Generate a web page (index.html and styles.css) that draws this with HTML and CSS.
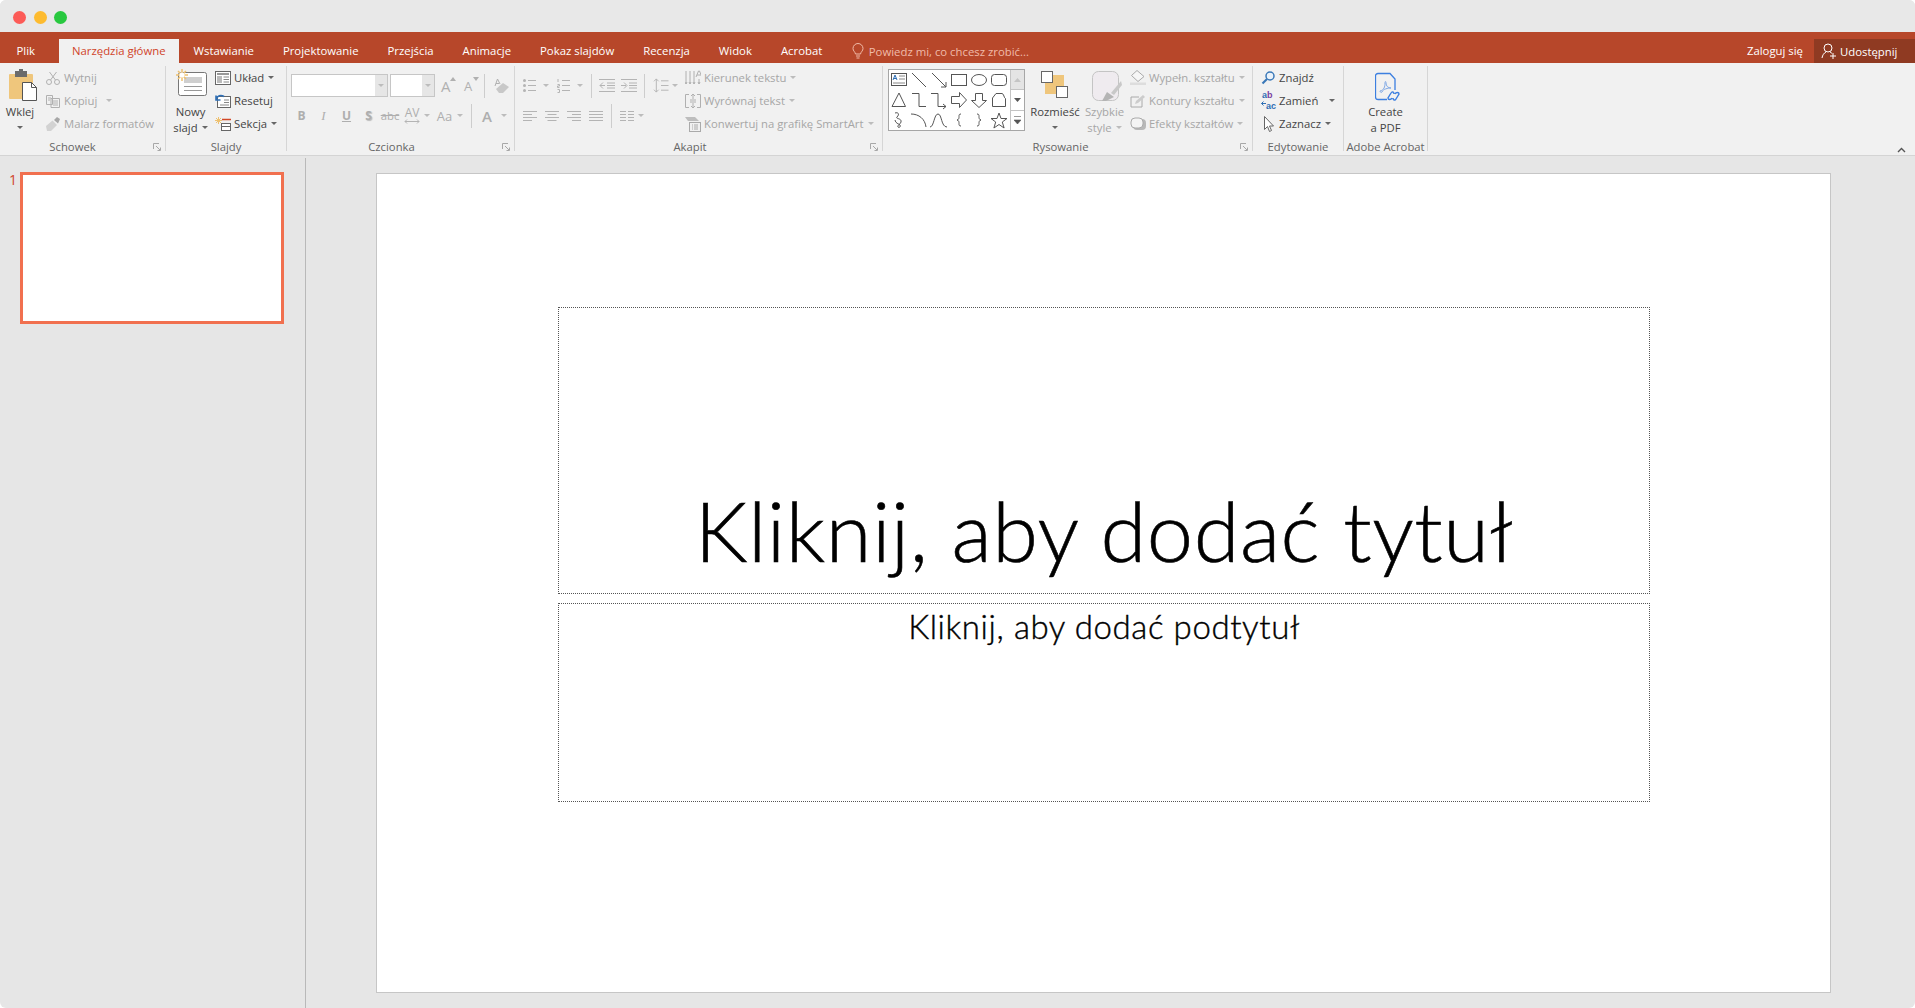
FILE: index.html
```html
<!DOCTYPE html>
<html lang="pl">
<head>
<meta charset="utf-8">
<title>PowerPoint</title>
<link rel="stylesheet" href="styles.css">
</head>
<body>
<header class="titlebar">
  <span class="dot dot-red"></span><span class="dot dot-yellow"></span><span class="dot dot-green"></span>
</header>
<nav class="tabs">
  <span class="tab tab-file">Plik</span>
  <span class="tab tab-active">Narzędzia główne</span>
  <span class="tab">Wstawianie</span>
  <span class="tab">Projektowanie</span>
  <span class="tab">Przejścia</span>
  <span class="tab">Animacje</span>
  <span class="tab">Pokaz slajdów</span>
  <span class="tab">Recenzja</span>
  <span class="tab">Widok</span>
  <span class="tab">Acrobat</span>
  <span class="tell">
    <svg width="14" height="16" viewBox="0 0 14 16" class="s-hint"><path d="M4.500 11C4 8.500 2 8 2 5.500a5 5 0 0 1 10 0C12 8 10 8.500 9.500 11zM5 13h4M5.500 15h3"/></svg>
    Powiedz mi, co chcesz zrobić...
  </span>
  <span class="login">Zaloguj się</span>
  <span class="share">
    <svg width="16" height="16" viewBox="0 0 16 16" class="s-white"><circle cx="7" cy="5" r="4"/><path d="M1 15c.5-3 2-5 4-6M9 9c1 .4 1.500 1 2 1.500M12 10v6M9 13h6"/></svg>
    Udostępnij
  </span>
</nav>
<section class="ribbon">
  <div class="group g-clip">
    <div class="body">
      <div class="big w-wklej">
        <div class="big-icon">
          <svg width="40" height="38" viewBox="0 0 40 38"><rect x="9" y="8" width="24" height="25" rx="1" fill="#efc67c"/><rect x="15" y="5" width="12" height="6" fill="#6b6b6b"/><rect x="19" y="3" width="4" height="4" fill="#6b6b6b"/><path d="M22.500 16.500h9l5 5v13h-14z" fill="#fff" stroke="#555"/><path d="M31.500 16.500v5h5" fill="none" stroke="#555"/></svg>
        </div>
        <div class="big-line">Wklej</div>
        <div class="big-line big-line-2"><i class="caret caret-solo"></i></div>
      </div>
      <div class="stack ml-6">
        <div class="row off"><svg class="ri14 s-off" viewBox="0 0 14 14"><circle cx="3" cy="11" r="2.500"/><circle cx="11" cy="11" r="2.500"/><path d="M4.500 9 10.500 1M9.500 9 3.500 1"/></svg>Wytnij</div>
        <div class="row off"><svg class="ri14 s-off" viewBox="0 0 14 14"><path d="M.5 1.500h6v9h-6zM5 4.500h8.500v9H5z" fill="#f1f1f1"/><path d="M7 7h5M7 9h5M7 11h5M2 4h3M2 6h2"/></svg>Kopiuj<i class="caret caret-off ml-9"></i></div>
        <div class="row off"><svg class="ri14" viewBox="0 0 14 14"><path d="M0 9 6.500 3.500 11 8l-6 6H1z" fill="#d2d2d2"/><path d="M8 3l3-3 3 2-2 4.500z" fill="#a6a6a6"/></svg>Malarz formatów</div>
      </div>
    </div>
    <div class="label">Schowek</div>
    <svg class="launch" viewBox="0 0 8 8"><path d="M.5 6V.5H6M3 3l4 4M4.500 7.500h3v-3"/></svg>
  </div>

  <div class="group g-slides">
    <div class="body">
      <div class="big w-new ml-7">
        <div class="big-icon">
          <svg width="32" height="38" viewBox="0 -3 32 38"><rect x="3.500" y="3.500" width="28" height="23" rx="2" fill="#fff" stroke="#777"/><rect x="9" y="8" width="18" height="6" fill="#cfcfcf"/><path d="M9 17.500h18M9 21.500h18" stroke="#999"/><g stroke="#eec170" stroke-width="1.500"><path d="M7 0v12M1 6h12M3 2l8 8M11 2l-8 8"/></g><circle cx="7" cy="6" r="2.500" fill="#fff"/></svg>
        </div>
        <div class="big-line">Nowy</div>
        <div class="big-line big-line-2">slajd<i class="caret"></i></div>
      </div>
      <div class="stack ml-7">
        <div class="row"><svg class="ri16" viewBox="0 0 16 14"><rect x=".5" y=".5" width="15" height="13" fill="#fff" stroke="#666"/><rect x="2" y="2" width="12" height="2" fill="#999"/><rect x="2" y="5" width="5" height="7" fill="#bbb"/><path d="M8.500 6H14M8.500 8.500H14M8.500 11H14" stroke="#888"/></svg>Układ<i class="caret"></i></div>
        <div class="row"><svg class="ri16" viewBox="0 0 16 14"><rect x="2.500" y="2.500" width="13" height="11" fill="#fff" stroke="#666"/><path d="M9 6h5M9 8.500h5M5 11h9" stroke="#888"/><path d="M1 5.500C2 1.500 6 .5 9 2.500M1 1.500v4.500h4.500" fill="none" stroke="#2f6fb5" stroke-width="1.600"/></svg>Resetuj</div>
        <div class="row"><svg class="ri16" viewBox="0 0 16 14"><g stroke="#eec170"><path d="M3.500 0v7M0 3.500h7M1 1l5 5M6 1 1 6"/></g><path d="M7 2.500h9" stroke="#d24726" stroke-width="1.500"/><rect x="6.500" y="6.500" width="9" height="7" fill="#fff" stroke="#666"/><path d="M6.500 9.500h9" stroke="#666"/></svg>Sekcja<i class="caret"></i></div>
      </div>
    </div>
    <div class="label">Slajdy</div>
  </div>

  <div class="group g-font">
    <div class="body col pad-font">
      <div class="strip">
        <div class="combo w-face"><span class="combo-drop"><i class="caret caret-off caret-solo"></i></span></div>
        <div class="combo w-size ml-2"><span class="combo-drop"><i class="caret caret-off caret-solo"></i></span></div>
        <span class="glyph g-a ml-6">A<svg class="sup" viewBox="0 0 6 4"><path d="M0 4l3-4 3 4z"/></svg></span>
        <span class="glyph g-a2 ml-9">A<svg class="sup" viewBox="0 0 6 4"><path d="M0 0l3 4 3-4z"/></svg></span>
        <i class="vsep ml-6"></i>
        <svg class="ml-9" width="15" height="16" viewBox="0 0 15 16"><path d="M2 11 9 5l6 4-6 6H5z" fill="#c8c8c8"/><path d="M1 8 3.500 1 6 6M2 5.500h3" fill="none" stroke="#b0b0b0"/></svg>
      </div>
      <div class="strip strip-low">
        <span class="fmt f-b">B</span>
        <span class="fmt f-i">I</span>
        <span class="fmt f-u">U</span>
        <span class="fmt f-s">S</span>
        <span class="fmt f-abc">abc</span>
        <span class="fmt f-av">AV<svg width="16" height="5" viewBox="0 0 16 5"><path d="M1 2.500h14M3 .5l-2 2 2 2M13 .5l2 2-2 2" fill="none" stroke="#b4b4b4"/></svg></span><i class="caret caret-off ml-1"></i>
        <span class="fmt f-aa">Aa</span><i class="caret caret-off ml-2"></i>
        <i class="vsep ml-8"></i>
        <span class="fmt f-col">A</span><i class="caret caret-off ml-7"></i>
      </div>
    </div>
    <div class="label">Czcionka</div>
    <svg class="launch" viewBox="0 0 8 8"><path d="M.5 6V.5H6M3 3l4 4M4.500 7.500h3v-3"/></svg>
  </div>

  <div class="group g-para">
    <div class="body">
      <div class="col pad-para">
        <div class="strip">
          <svg class="pi13" viewBox="0 0 13 14"><g class="dots"><circle cx="1.500" cy="2" r="1.500"/><circle cx="1.500" cy="7" r="1.500"/><circle cx="1.500" cy="12" r="1.500"/></g><path d="M5 2h8M5 7h8M5 12h8"/></svg>
          <i class="caret caret-off ml-7"></i>
          <svg class="pi13 ml-8" viewBox="0 0 13 14"><path d="M5 2h8M5 7h8M5 12h8M1 .5v3M.5 6h2v1.500h-2V9h2M.5 11h2v3h-2"/></svg>
          <i class="caret caret-off ml-7"></i>
          <i class="vsep ml-8"></i>
          <svg class="pi16 ml-7" viewBox="0 0 16 13"><path d="M0 .5h16M8 4h8M8 6.500h8M8 9h8M0 12.500h16M6 6.500H1M4 3.500l-3 3 3 3"/></svg>
          <svg class="pi16 ml-6" viewBox="0 0 16 13"><path d="M0 .5h16M8 4h8M8 6.500h8M8 9h8M0 12.500h16M0 6.500h5M3 3.500l3 3-3 3"/></svg>
          <i class="vsep ml-7"></i>
          <svg class="pi16 ml-8" viewBox="0 0 16 16"><path d="M3 1v14M.5 3.500 3 1l2.500 2.500M.5 12.500 3 15l2.500-2.500M8 3h8M8 8h8M8 13h8"/></svg>
          <i class="caret caret-off ml-3"></i>
        </div>
        <div class="strip strip-low">
          <svg class="pi14" viewBox="0 0 14 10"><path d="M0 .5h14M0 3.500h9M0 6.500h14M0 9.500h9"/></svg>
          <svg class="pi14 ml-8" viewBox="0 0 14 10"><path d="M0 .5h14M2.500 3.500h9M0 6.500h14M2.500 9.500h9"/></svg>
          <svg class="pi14 ml-8" viewBox="0 0 14 10"><path d="M0 .5h14M5 3.500h9M0 6.500h14M5 9.500h9"/></svg>
          <svg class="pi14 ml-8" viewBox="0 0 14 10"><path d="M0 .5h14M0 3.500h14M0 6.500h14M0 9.500h14"/></svg>
          <i class="vsep ml-8"></i>
          <svg class="pi14 ml-8" viewBox="0 0 14 10"><path d="M0 .5h6M8 .5h6M0 3.500h6M8 3.500h6M0 6.500h6M8 6.500h6M0 9.500h6M8 9.500h6"/></svg>
          <i class="caret caret-off"></i>
        </div>
      </div>
      <div class="stack ml-7">
        <div class="row off"><svg class="ri16 s-off" viewBox="0 0 16 16"><path d="M1 1v13M.0 12l1 2 1-2M5 1v13M4 12l1 2 1-2M9 1v13M8 12l1 2 1-2M14 9v5M13 12l1 2 1-2"/><path d="M11 7l2.500-6h1L17 7M12 5h4"/></svg>Kierunek tekstu<i class="caret caret-off"></i></div>
        <div class="row off"><svg class="ri16 s-off" viewBox="0 0 16 16"><path d="M4 1.500H.5v13H4M12 1.500h3.500v13H12M8 1v5M6 3l2-2 2 2M8 10v5M6 13l2 2 2-2M5 7h6M5 9h6"/></svg>Wyrównaj tekst<i class="caret caret-off"></i></div>
        <div class="row off"><svg class="ri16" viewBox="0 0 16 16"><path d="M0 1h10l4 4H3z" fill="#bdbdbd"/><rect x="4.500" y="6.500" width="11" height="9" fill="#f1f1f1" stroke="#aaa"/><path d="M7 9h1M9 9h4M7 11h1M9 11h4M7 13h1M9 13h4" stroke="#aaa"/></svg>Konwertuj na grafikę SmartArt<i class="caret caret-off"></i></div>
      </div>
    </div>
    <div class="label">Akapit</div>
    <svg class="launch" viewBox="0 0 8 8"><path d="M.5 6V.5H6M3 3l4 4M4.500 7.500h3v-3"/></svg>
  </div>

  <div class="group g-draw">
    <div class="body">
      <div class="gallery">
        <div class="shapes">
          <svg viewBox="0 0 20 20"><rect x="2.500" y="3.500" width="15" height="12"/><path d="M4 10l2-5 2 5M4.700 8.500h2.600" stroke="#2f6fb5"/><path d="M10 6h6M10 9h6M4 13h12" stroke="#888"/></svg>
          <svg viewBox="0 0 20 20"><path d="M3 3l14 14"/></svg>
          <svg viewBox="0 0 20 20"><path d="M3 3l14 14M17 12v5h-5"/></svg>
          <svg viewBox="0 0 20 20"><rect x="2.500" y="4.500" width="15" height="11"/></svg>
          <svg viewBox="0 0 20 20"><ellipse cx="10" cy="10" rx="7.500" ry="5.500"/></svg>
          <svg viewBox="0 0 20 20"><rect x="2.500" y="4.500" width="15" height="11" rx="3"/></svg>
          <svg viewBox="0 0 20 20"><path d="M10 3 3 16.500h13.500z"/></svg>
          <svg viewBox="0 0 20 20"><path d="M3 3.500h7v13h7"/></svg>
          <svg viewBox="0 0 20 20"><path d="M2 3.500h7v13h8M14 14l3 2.500-3 2.500"/></svg>
          <svg viewBox="0 0 20 20"><path d="M2.500 6.500h8V2.500l7 7.500-7 7.500v-4h-8z"/></svg>
          <svg viewBox="0 0 20 20"><path d="M6.500 3.500h7v7h4l-7.500 7-7.500-7h4z"/></svg>
          <svg viewBox="0 0 20 20"><path d="M3.500 8 7 3.500h6c2 0 2 5 3.500 5v8h-13z"/></svg>
          <svg viewBox="0 0 20 20"><path d="M6 3c3-1 5 1 2 4-2 2 5 1 4 5-1 3-4 3-3 5 1 1 3 0 2-2-1-1-5-2-5-5"/></svg>
          <svg viewBox="0 0 20 20"><path d="M2 4c8 0 14 5 15 13"/></svg>
          <svg viewBox="0 0 20 20"><path d="M1 17c4 0 4-13 8-13s3 13 9 13"/></svg>
          <svg viewBox="0 0 20 20"><path d="M12 4c-2 0-2 1-2 2.500S10 9.500 8 10c2 .5 2 2 2 3.500s0 2.500 2 2.500"/></svg>
          <svg viewBox="0 0 20 20"><path d="M8 4c2 0 2 1 2 2.500s0 3 2 3.500c-2 .5-2 2-2 3.500s0 2.500-2 2.500"/></svg>
          <svg viewBox="0 0 20 20"><path d="M10 3l2 5.500h6l-4.700 3.500 1.800 6L10 14.500 4.900 18l1.800-6L2 8.500h6z"/></svg>
        </div>
        <div class="scroller">
          <span class="sc sc-up"><svg width="7" height="4" viewBox="0 0 7 4"><path d="M0 4l3.500-4 3.500 4z" fill="#c4c4c4"/></svg></span>
          <span class="sc"><svg width="7" height="4" viewBox="0 0 7 4"><path d="M0 0l3.500 4 3.500-4z" fill="#555"/></svg></span>
          <span class="sc"><svg width="7" height="8" viewBox="0 0 7 8"><path d="M0 .5h7M0 4l3.500 4 3.500-4z" fill="#555" stroke="#555" stroke-width=".6"/></svg></span>
        </div>
      </div>
      <div class="big w-arrange ml-5">
        <div class="big-icon">
          <svg width="28" height="38" viewBox="0 -5 28 38"><rect x="4" y="4" width="19" height="19" fill="#efc67c"/><rect x=".5" y=".5" width="11" height="11" fill="#fff" stroke="#666"/><rect x="15.500" y="15.500" width="11" height="11" fill="#fff" stroke="#666"/></svg>
        </div>
        <div class="big-line">Rozmieść</div>
        <div class="big-line big-line-2"><i class="caret caret-solo"></i></div>
      </div>
      <div class="big off w-quick ml-5">
        <div class="big-icon">
          <svg class="ml-5" width="30" height="38" viewBox="0 -5 30 38"><rect x=".5" y=".5" width="26" height="29" rx="6" fill="#efebef" stroke="#c4c4c4"/><path d="M10 30 15 21l7 5-8 4z" fill="#b4b4b4"/><path d="M19 22 29 10l1 4-8 10z" fill="#c8c8c8"/></svg>
        </div>
        <div class="big-line">Szybkie</div>
        <div class="big-line big-line-2">style<i class="caret caret-off"></i></div>
      </div>
      <div class="stack ml-6">
        <div class="row off"><svg class="ri16" viewBox="0 0 16 16"><path d="M7 .5l7 6-6 5-6.500-6z" fill="#f6f6f6" stroke="#aaa"/><path d="M0 12.500h16V15H0z" fill="#ddd"/></svg>Wypełn. kształtu<i class="caret caret-off"></i></div>
        <div class="row off"><svg class="ri16" viewBox="0 0 16 16"><path d="M12 6v8H1V4h8" fill="none" stroke="#aaa"/><path d="M5 11l1-3 7-6 2 2-7 6z" fill="#ccc"/></svg>Kontury kształtu<i class="caret caret-off"></i></div>
        <div class="row off"><svg class="ri16" viewBox="0 0 16 16"><rect x="3" y="3" width="13" height="11" rx="4" fill="#b8b8b8"/><rect x="1" y="2" width="12" height="10" rx="4" fill="#f4f4f4" stroke="#aaa"/></svg>Efekty kształtów<i class="caret caret-off"></i></div>
      </div>
    </div>
    <div class="label">Rysowanie</div>
    <svg class="launch" viewBox="0 0 8 8"><path d="M.5 6V.5H6M3 3l4 4M4.500 7.500h3v-3"/></svg>
  </div>

  <div class="group g-edit">
    <div class="body">
      <div class="stack ml-8">
        <div class="row"><svg class="ri14" viewBox="0 0 14 14"><circle cx="9" cy="5" r="4" fill="#eaf2fa" stroke="#3a78b8" stroke-width="1.500"/><path d="M6 8 1.500 12.500" stroke="#3a78b8" stroke-width="2.200"/></svg>Znajdź</div>
        <div class="row"><span class="abac"><span class="ab">a<b>b</b></span><span class="ac">ac</span><svg class="abac-arrow" width="5" height="5" viewBox="0 0 5 5"><path d="M5 2.500H.5M2.500.5l-2 2 2 2" fill="none" stroke="#2f6fb5"/></svg></span>Zamień<i class="caret ml-11"></i></div>
        <div class="row"><svg class="ri14" viewBox="0 0 14 16"><path d="M3.500.5v13l3-3 2 5 2-1-2-4.500h4z" fill="#fff" stroke="#666"/></svg>Zaznacz<i class="caret"></i></div>
      </div>
    </div>
    <div class="label">Edytowanie</div>
  </div>

  <div class="group g-acro">
    <div class="body">
      <div class="big w-acro">
        <div class="big-icon">
          <svg class="ml-5" width="26" height="38" viewBox="0 -7 26 38"><path d="M20 17V6l-5-5.500H3c-1.500 0-2.500 1-2.500 2.500v21c0 1.500 1 2.500 2.500 2.500h9" fill="none" stroke="#3c7fe0" stroke-width="1.300"/><path d="M5 18c4-1 5-4 5-8 0-2 1-2 1 0 0 3 2 5 5 5-3 0-8 1-9 4-1 1-2 0-2-1z" fill="none" stroke="#7fa8e6"/><path d="M17 25c-1 2-4 2-4 0l3-5c1-2 3-1 3 1M20 21c1-2 4-2 4 0l-3 5c-1 2-3 1-3-1" fill="none" stroke="#3c7fe0" stroke-width="1.400"/></svg>
        </div>
        <div class="big-line">Create</div>
        <div class="big-line big-line-2">a PDF</div>
      </div>
    </div>
    <div class="label">Adobe Acrobat</div>
  </div>

  <svg class="collapse" width="9" height="6" viewBox="0 0 9 6"><path d="M1 5l3.500-3.500L8 5" fill="none" stroke="#555" stroke-width="1.400"/></svg>
</section>
<main class="workspace">
  <aside class="thumbs">
    <span class="thumb-num">1</span>
    <div class="thumb"></div>
  </aside>
  <section class="editor">
    <div class="slide">
      <div class="ph ph-title"><span>Kliknij, aby dodać tytuł</span></div>
      <div class="ph ph-sub"><span>Kliknij, aby dodać podtytuł</span></div>
    </div>
  </section>
</main>
</body>
</html>
```
FILE: styles.css
```css
* { box-sizing: border-box; }
html { height: 100%; background: #fff; }
body {
  height: 100%;
  margin: 0;
  overflow: hidden;
  display: flex;
  flex-direction: column;
  font-family: "Open Sans", "Liberation Sans", sans-serif;
  font-size: 11.3px;
  color: #444;
  background: #e6e6e6;
  border-radius: 6px;
}
svg { display: block; flex: none; }
i { font-style: normal; }

.titlebar {
  height: 32px;
  background: #e8e8e8;
  display: flex;
  align-items: center;
  gap: 7.5px;
  padding: 2px 0 0 13px;
  flex: none;
}
.dot { width: 13px; height: 13px; border-radius: 50%; }
.dot-red { background: #fc5b57; }
.dot-yellow { background: #fdbb2f; }
.dot-green { background: #28c83f; }

.tabs {
  height: 31px;
  background: #b7472a;
  display: flex;
  align-items: flex-end;
  color: #fff;
  flex: none;
  font-size: 11.35px;
}
.tab { height: 24px; line-height: 24px; padding: 0 14.5px; white-space: nowrap; }
.tab-file { margin-left: 2px; margin-right: 9px; }
.tab-active { background: #f1f1f1; color: #d0442a; padding: 0 13.5px; }
.tell { height: 24px; display: flex; align-items: center; gap: 4px; margin-left: 14px; color: #f0bba9; white-space: nowrap; }
.s-hint { fill: none; stroke: #f0bba9; }
.s-white { fill: none; stroke: #fff; }
.login { height: 24px; line-height: 24px; margin-left: auto; margin-right: 11px; }
.share {
  height: 24px;
  width: 101px;
  background: #8f3a22;
  display: flex;
  align-items: center;
  gap: 3px;
  padding-left: 7px;
}

.ribbon {
  height: 93px;
  flex: none;
  background: #f1f1f1;
  border-bottom: 1px solid #d4d4d4;
  display: flex;
  padding-top: 3px;
}
.group {
  position: relative;
  height: 85px;
  border-right: 1px solid #d6d6d6;
  flex: none;
  display: flex;
  flex-direction: column;
}
.g-clip { width: 166px; }
.g-slides { width: 121px; }
.g-font { width: 228px; }
.g-para { width: 368px; }
.g-draw { width: 370px; }
.g-edit { width: 91px; }
.g-acro { width: 84px; }
.body { height: 69px; flex: none; display: flex; }
.label { height: 12px; line-height: 12px; margin-top: 6px; text-align: center; color: #666; flex: none; white-space: nowrap; }
.g-clip .label { padding-right: 20px; }
.g-font .label { padding-right: 18px; }
.g-para .label { padding-right: 17px; }
.g-draw .label { padding-right: 14px; }
.launch { position: absolute; right: 4px; bottom: 0; width: 8px; height: 8px; fill: none; stroke: #a8a8a8; }

.big { display: flex; flex-direction: column; align-items: center; flex: none; white-space: nowrap; }
.big-icon { height: 38px; display: flex; align-items: flex-start; justify-content: center; flex: none; }
.big-line { height: 15px; line-height: 15px; display: flex; align-items: center; flex: none; }
.big-line-2 { margin-top: 1px; }
.w-wklej { width: 40px; }
.w-new { width: 35px; }
.w-arrange { width: 50px; }
.w-quick { width: 39px; }
.w-acro { width: 83px; }

.stack { display: flex; flex-direction: column; flex: none; }
.row { height: 23px; display: flex; align-items: center; white-space: nowrap; }
.off { color: #a6a6a6; }
.ri14 { width: 14px; height: 16px; margin-right: 4px; }
.ri16 { width: 16px; height: 16px; margin-right: 3px; }
.s-off { fill: none; stroke: #b0b0b0; }

.caret {
  display: inline-block;
  width: 0;
  height: 0;
  border-left: 3px solid transparent;
  border-right: 3px solid transparent;
  border-top: 3px solid #666;
  margin-left: 4px;
  flex: none;
}
.caret-off { border-top-color: #bcbcbc; }
.caret-solo { margin-left: 0; }

.ml-1 { margin-left: 1px; }
.ml-2 { margin-left: 2px; }
.ml-3 { margin-left: 3px; }
.ml-5 { margin-left: 5px; }
.ml-6 { margin-left: 6px; }
.ml-7 { margin-left: 7px; }
.ml-8 { margin-left: 8px; }
.ml-9 { margin-left: 9px; }
.ml-11 { margin-left: 11px; }

.col { display: flex; flex-direction: column; flex: none; }
.pad-font { padding: 8px 0 0 4px; }
.pad-para { padding: 8px 0 0 8px; width: 163px; }
.strip { height: 23px; display: flex; align-items: center; flex: none; }
.strip-low { margin-top: 7px; }

.combo {
  height: 23px;
  background: #fff;
  border: 1px solid #c6c6c6;
  display: flex;
  justify-content: flex-end;
  flex: none;
}
.w-face { width: 97px; }
.w-size { width: 45px; }
.combo-drop { width: 12px; background: #e6e6e6; display: flex; align-items: center; justify-content: center; }

.glyph { position: relative; display: block; font-size: 15px; line-height: 16px; color: #b0b0b0; width: 14px; flex: none; }
.g-a2 { font-size: 13px; }
.sup { position: absolute; right: -1px; top: -1px; width: 6px; height: 4px; fill: #b0b0b0; }
.vsep { display: block; width: 1px; height: 24px; background: #cdcdcd; flex: none; }

.fmt { color: #aeaeae; text-align: center; flex: none; line-height: 16px; }
.f-b { width: 21px; font-weight: 700; font-size: 12px; }
.f-i { width: 23px; font-style: italic; font-size: 13px; font-family: "Liberation Serif", serif; }
.f-u { width: 23px; text-decoration: underline; font-size: 12px; font-weight: 700; }
.f-s { width: 21px; font-size: 12px; font-weight: 700; text-shadow: 1px 1px 1px #bbb; }
.f-abc { width: 22px; text-decoration: line-through; }
.f-av { width: 22px; font-size: 12px; line-height: 12px; display: flex; flex-direction: column; align-items: center; }
.f-aa { width: 21px; margin-left: 4px; font-size: 13px; }
.f-col { width: 14px; margin-left: 8px; font-size: 15px; font-weight: 600; }

.pi13 { width: 13px; height: 15px; fill: none; stroke: #b4b4b4; }
.pi14 { width: 14px; height: 10px; fill: none; stroke: #b4b4b4; }
.pi16 { width: 16px; height: 15px; fill: none; stroke: #b4b4b4; }
.dots { fill: #b4b4b4; stroke: none; }

.gallery {
  margin: 3px 0 0 5px;
  width: 137px;
  height: 62px;
  background: #fff;
  border: 1px solid #a6a6a6;
  display: flex;
  justify-content: space-between;
  flex: none;
}
.shapes { display: grid; grid-template-columns: repeat(6, 20px); grid-auto-rows: 20px; }
.shapes svg { width: 20px; height: 20px; fill: none; stroke: #555; }
.scroller { width: 14px; border-left: 1px solid #c4c4c4; display: flex; flex-direction: column; }
.sc { flex: 1; display: flex; align-items: center; justify-content: center; border-bottom: 1px solid #c4c4c4; }
.sc:last-child { border-bottom: 0; }
.sc-up { background: #e4e4e4; }

.abac { position: relative; display: block; width: 18px; height: 21px; font: 700 9px/10.5px "Liberation Sans", sans-serif; color: #2f6fb5; flex: none; }
.ab { display: block; padding-left: 1px; }
.ab b { color: #7b3fa0; }
.ac { display: block; padding-left: 5px; }
.abac-arrow { position: absolute; left: 0; top: 11px; }

.collapse { margin: auto 9px 2px auto; }

.workspace { flex: 1; display: flex; min-height: 0; }
.thumbs {
  width: 306px;
  flex: none;
  margin-top: 2px;
  border-right: 1px solid #b9b9b9;
  display: flex;
  align-items: flex-start;
  padding: 14px 0 0 9px;
}
.thumb-num { width: 11px; color: #d0442a; font-size: 14px; line-height: 16px; }
.thumb { width: 264px; height: 152px; background: #fff; border: 3px solid #f1704f; }
.editor { flex: 1; padding: 17px 0 0 70px; }
.slide {
  width: 1455px;
  height: 820px;
  background: #fff;
  border: 1px solid #c6c6c6;
  padding: 133px 0 0 181px;
  display: flex;
  flex-direction: column;
  gap: 9px;
  font-family: Lato, "Liberation Sans", sans-serif;
  font-weight: 300;
  color: #000;
}
.ph { width: 1092px; border: 1px dotted #555; display: flex; justify-content: center; flex: none; white-space: nowrap; }
.ph-title { height: 287px; align-items: flex-end; font-size: 83px; line-height: 92px; padding-bottom: 17px; letter-spacing: .5px; -webkit-text-stroke: .6px #000; }
.ph-sub { height: 199px; align-items: flex-start; font-size: 33px; line-height: 38px; padding-top: 3px; letter-spacing: .6px; -webkit-text-stroke: .4px #000; }
```
